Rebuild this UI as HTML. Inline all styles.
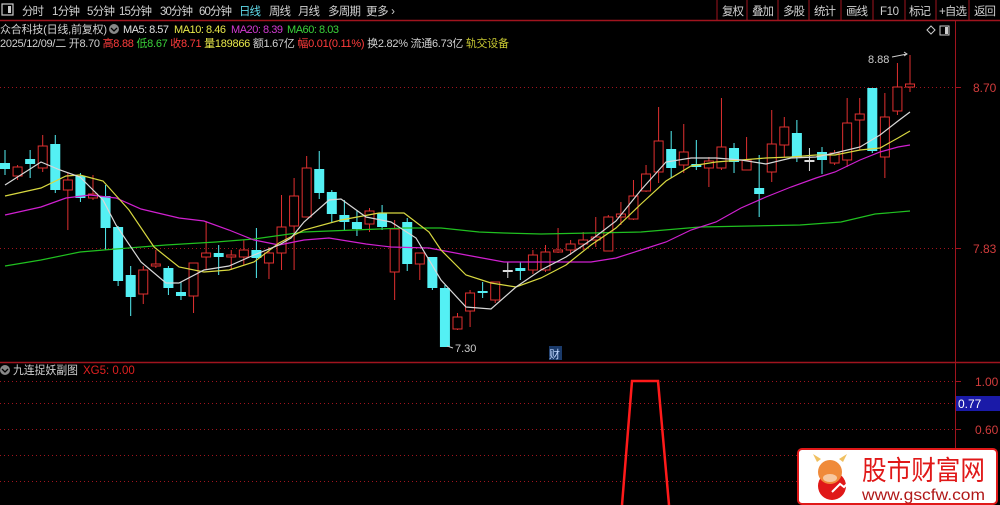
<!DOCTYPE html>
<html><head><meta charset="utf-8"><style>
body{margin:0;background:#000;width:1000px;height:505px;overflow:hidden;font-family:"Liberation Sans","Noto Sans CJK SC",sans-serif;}
svg{position:absolute;left:0;top:0}
</style></head><body>
<svg id="s" width="1000" height="505" xmlns="http://www.w3.org/2000/svg" font-family="Liberation Sans, Noto Sans CJK SC, sans-serif">
<rect width="1000" height="505" fill="#000"/>
<line x1="0" y1="20.5" x2="1000" y2="20.5" stroke="#a0141e" stroke-width="1.5"/>
<rect x="2" y="4" width="11" height="11" fill="none" stroke="#ccc" stroke-width="1.2"/><rect x="8" y="6" width="3" height="7" fill="#ccc"/>
<g font-size="11.5" fill="#d0d0d0" lengthAdjust="spacingAndGlyphs">
<text x="22" y="15" textLength="22">分时</text><text x="52" y="15" textLength="28">1分钟</text><text x="87" y="15" textLength="28">5分钟</text><text x="119" y="15" textLength="33">15分钟</text><text x="160" y="15" textLength="33">30分钟</text><text x="199" y="15" textLength="33">60分钟</text>
<text x="239" y="15" fill="#5fd8e8" textLength="22">日线</text><text x="269" y="15" textLength="22">周线</text><text x="298" y="15" textLength="22">月线</text><text x="328" y="15" textLength="33">多周期</text><text x="366" y="15" textLength="29">更多 ›</text>
<text x="722" y="15" textLength="22">复权</text><text x="752" y="15" textLength="22">叠加</text><text x="783" y="15" textLength="22">多股</text><text x="814" y="15" textLength="22">统计</text><text x="846" y="15" textLength="22">画线</text><text x="880" y="15" textLength="19">F10</text><text x="909" y="15" textLength="22">标记</text><text x="939" y="15" textLength="28">+自选</text><text x="974" y="15" textLength="22">返回</text>
</g>
<g stroke="#a0141e"><line x1="717" y1="0" x2="717" y2="20"/><line x1="747" y1="0" x2="747" y2="20"/><line x1="778" y1="0" x2="778" y2="20"/><line x1="809" y1="0" x2="809" y2="20"/><line x1="841" y1="0" x2="841" y2="20"/><line x1="873" y1="0" x2="873" y2="20"/><line x1="905" y1="0" x2="905" y2="20"/><line x1="936" y1="0" x2="936" y2="20"/><line x1="969" y1="0" x2="969" y2="20"/></g>
<g font-size="11" lengthAdjust="spacingAndGlyphs">
<text x="0" y="33" fill="#d0d0d0" textLength="107">众合科技(日线,前复权)</text>
<circle cx="114" cy="29" r="5" fill="#888"/><path d="M111 28l3 3 3-3" stroke="#000" fill="none" stroke-width="1.3"/>
<text x="123" y="33" fill="#e0e0e0" textLength="46">MA5: 8.57</text><text x="174" y="33" fill="#e8e84a" textLength="52">MA10: 8.46</text><text x="231" y="33" fill="#d23ad2" textLength="52">MA20: 8.39</text><text x="287" y="33" fill="#3ad23a" textLength="52">MA60: 8.03</text>
<text x="0" y="47" fill="#d0d0d0" textLength="509">2025/12/09/二 开8.70 <tspan fill="#ff3c3c">高8.88</tspan> <tspan fill="#3ad23a">低8.67</tspan> <tspan fill="#ff3c3c">收8.71</tspan> <tspan fill="#e8e84a">量189866</tspan> 额1.67亿 <tspan fill="#ff3c3c">幅0.01(0.11%)</tspan> 换2.82% 流通6.73亿 <tspan fill="#c8c832">轨交设备</tspan></text>
</g>
<path d="M927 30l4-4 4 4-4 4z" fill="none" stroke="#ccc"/><rect x="940" y="26" width="9" height="9" fill="none" stroke="#ccc"/><rect x="945" y="27" width="3" height="7" fill="#ccc"/>
<line x1="955.5" y1="21" x2="955.5" y2="505" stroke="#a0141e"/>
<line x1="0" y1="87.5" x2="955" y2="87.5" stroke="#a0141e" stroke-dasharray="1 3"/>
<line x1="0" y1="248.5" x2="955" y2="248.5" stroke="#a0141e" stroke-dasharray="1 3"/>
<line x1="955" y1="87.5" x2="961" y2="87.5" stroke="#a0141e"/><line x1="955" y1="248.5" x2="961" y2="248.5" stroke="#a0141e"/>
<text x="973" y="92" font-size="12" fill="#d23c3c">8.70</text><text x="973" y="253" font-size="12" fill="#d23c3c">7.83</text>
<g id="c"></g>
<text x="455" y="352" font-size="11" fill="#ccc">7.30</text><path d="M453 348l-6-2" stroke="#ccc"/>
<text x="868" y="63" font-size="11" fill="#ccc">8.88</text><path d="M892 57l15-3m-3-2l3 2-3 2" stroke="#ccc" fill="none"/>
<rect x="549" y="346" width="13" height="14" fill="#1a3a6a"/><text x="549" y="358" font-size="11" fill="#bfd6ff">财</text>
<line x1="0" y1="362.5" x2="1000" y2="362.5" stroke="#a0141e" stroke-width="1.5"/>
<circle cx="5" cy="370" r="5" fill="#888"/><path d="M2 369l3 3 3-3" stroke="#000" fill="none" stroke-width="1.3"/>
<text x="13" y="374" font-size="11.5" fill="#d0d0d0" textLength="65" lengthAdjust="spacingAndGlyphs">九连捉妖副图</text><text x="83" y="374" font-size="11.5" fill="#e02020">XG5: 0.00</text>
<g stroke="#a0141e" stroke-dasharray="1 3"><line x1="0" y1="381.5" x2="955" y2="381.5"/><line x1="0" y1="403.5" x2="955" y2="403.5"/><line x1="0" y1="429.5" x2="955" y2="429.5"/><line x1="0" y1="455.5" x2="955" y2="455.5"/><line x1="0" y1="481.5" x2="955" y2="481.5"/></g>
<g stroke="#a0141e"><line x1="955" y1="381.5" x2="961" y2="381.5"/><line x1="955" y1="429.5" x2="961" y2="429.5"/><line x1="955" y1="455.5" x2="961" y2="455.5"/><line x1="955" y1="481.5" x2="961" y2="481.5"/></g>
<text x="975" y="386" font-size="12" fill="#d23c3c">1.00</text><text x="975" y="434" font-size="12" fill="#d23c3c">0.60</text>
<rect x="956" y="396" width="44" height="15" fill="#1a1aa8"/><text x="958" y="408" font-size="12" fill="#fff">0.77</text>
<path d="M622 505L632 381H658L669 505" stroke="#ff1a1a" stroke-width="2.5" fill="none"/>
<rect x="798" y="449" width="199" height="55" rx="4" fill="#fff" stroke="#e01818" stroke-width="2"/>
<circle cx="832" cy="486" r="14" fill="#e01818"/><circle cx="830" cy="472" r="12" fill="#f08a3a"/>
<path d="M817 462l-4-8 8 5M843 462l4-8-8 5" fill="#f0c060"/><ellipse cx="830" cy="478" rx="7" ry="4" fill="#f7c8a0"/>
<path d="M832 492l8-8 4 3 8-8" stroke="#fff" stroke-width="2" fill="none"/>
<text x="862" y="480" font-size="27" fill="#e01818" font-family="Noto Sans CJK SC, sans-serif" textLength="123" lengthAdjust="spacingAndGlyphs">股市财富网</text>
<text x="862" y="500" font-size="16" fill="#b01818" textLength="123" lengthAdjust="spacingAndGlyphs">www.gscfw.com</text>
</svg>
<script>
var C=[[163,169,150,175,0],[167,176,165,180,1],[159,164,150,178,0],[146,168,135,172,1],[144,190,135,193,0],[180,190,173,230,1],[176,198,173,202,0],[194,198,175,200,1],[196,228,185,250,0],[227,281,226,286,0],[275,297,266,316,0],[270,294,266,304,1],[264,266,250,268,1],[268,288,266,295,0],[292,296,282,300,0],[263,296,263,313,1],[253,257,221,269,1],[253,257,245,275,0],[255,257,250,270,1],[250,257,240,265,1],[250,258,228,278,0],[253,263,247,279,1],[227,253,195,270,1],[196,226,178,270,1],[168,217,156,217,1],[169,193,151,199,0],[192,214,190,222,0],[215,222,200,230,0],[222,229,210,236,0],[211,224,208,232,1],[213,227,205,230,0],[229,272,220,300,1],[222,264,218,271,0],[253,264,253,280,1],[257,288,257,290,0],[288,347,285,347,0],[317,329,313,330,1],[293,311,290,327,1],[291,293,282,298,0],[282,300,282,303,1],[270,271,262,278,2],[268,271,262,280,0],[255,270,250,274,1],[252,270,245,272,1],[250,252,228,253,1],[244,250,240,255,1],[240,244,232,250,1],[237,240,217,247,1],[217,251,215,251,1],[214,217,202,225,1],[196,219,180,220,1],[174,191,165,192,1],[141,172,107,183,1],[149,168,131,178,0],[152,165,124,173,1],[164,167,140,170,0],[161,168,157,187,1],[147,168,98,170,1],[148,162,143,173,0],[160,170,137,170,1],[188,194,155,217,0],[144,172,110,182,1],[127,145,117,157,1],[133,157,120,162,0],[160,160,148,171,2],[152,160,147,174,0],[153,163,150,165,1],[123,160,98,167,1],[114,120,98,150,1],[88,151,88,153,0],[117,157,93,178,1],[87,111,63,115,1],[84,87,55,92,1]];
var h='',n=C.length;
for(var i=0;i<n;i++){var x=5+(905/(n-1))*i,c=C[i],col=c[4]==1?'#e03030':c[4]==0?'#54f0f4':'#ddd';
h+='<line x1="'+x+'" y1="'+c[2]+'" x2="'+x+'" y2="'+c[3]+'" stroke="'+col+'"/>';
var hh=Math.max(c[1]-c[0],1);
if(c[4]==1)h+='<rect x="'+(x-4.5)+'" y="'+c[0]+'" width="9" height="'+hh+'" fill="#000" stroke="'+col+'"/>';
else h+='<rect x="'+(x-5)+'" y="'+c[0]+'" width="10" height="'+Math.max(hh,2)+'" fill="'+col+'"/>';}
function pl(p,col){return '<polyline points="'+p+'" fill="none" stroke="'+col+'" stroke-width="1.2"/>';}
h+=pl("5,266 41,260 80,252 116,249 166,245 216,242 254,239 304,232 354,230 404,228 441,228 479,232 504,233 541,234 591,233 641,232 700,227 750,226 800,225 841,222 875,214 910,211","#20c020");
h+=pl("5,215 41,207 66,198 90,195 116,198 141,209 179,218 204,221 229,230 254,240 279,245 304,240 329,238 366,244 391,247 429,248 466,255 504,262 541,262 591,262 616,258 641,250 666,242 691,230 716,222 741,208 766,197 791,187 816,178 835,172 860,160 880,152 898,147 910,145","#d020d0");
h+=pl("5,196 41,188 66,176 80,175 103,181 129,210 154,247 179,267 204,272 229,270 254,262 279,243 304,230 341,220 379,213 404,213 429,232 441,250 466,275 491,283 516,287 541,278 566,265 591,245 616,228 641,204 666,181 691,166 716,162 741,160 766,158 791,157 816,155 835,155 860,150 880,148 898,138 910,131","#d8d840");
h+=pl("5,185 41,162 60,170 80,177 103,200 116,225 141,262 166,283 179,283 204,270 229,266 254,255 279,245 291,238 304,222 329,200 341,199 366,217 391,222 416,238 441,280 466,307 491,309 516,287 541,270 566,257 591,240 616,221 641,190 666,162 691,158 716,158 741,160 766,164 791,158 816,157 835,153 860,147 880,135 898,121 910,112","#d8d8d8");
document.getElementById('c').innerHTML=h;
</script>
</body></html>
